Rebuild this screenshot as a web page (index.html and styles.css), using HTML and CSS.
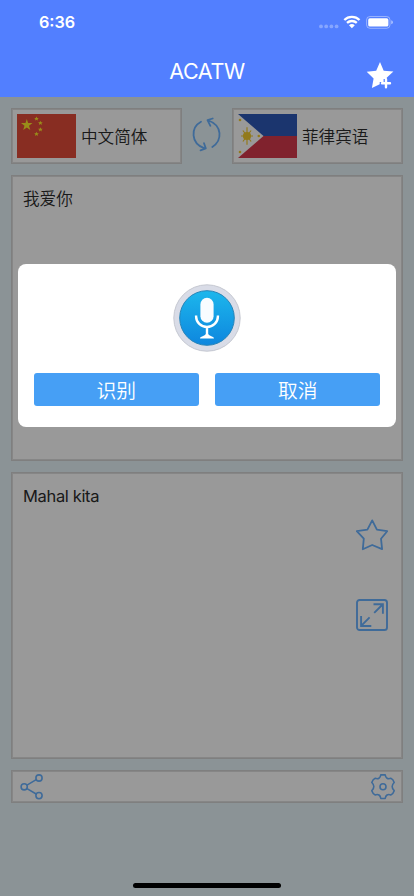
FILE: index.html
```html
<!DOCTYPE html>
<html lang="zh-CN">
<head>
    <meta charset="UTF-8">
    <meta name="viewport" content="width=device-width, initial-scale=1.0">
    <title>ACATW</title>
    <link rel="stylesheet" href="styles.css">
</head>
<body>
    <header class="header">
        <div class="status-bar">
            <span class="time">6:36</span>
            <svg class="status-icons" width="84" height="16" viewBox="0 0 84 16">
                <g fill="#fff" opacity=".3">
                    <circle cx="3" cy="12.4" r="1.9"/>
                    <circle cx="8.2" cy="12.4" r="1.9"/>
                    <circle cx="13.4" cy="12.4" r="1.9"/>
                    <circle cx="18.6" cy="12.4" r="1.9"/>
                </g>
                <g fill="none" stroke="#fff" stroke-width="2.3">
                    <path d="M26.3 6a11 11 0 0 1 15.2 0"/>
                    <path d="M29 8.9a7.2 7.2 0 0 1 9.8 0"/>
                </g>
                <path fill="#fff" d="M31 11.2a4.4 4.4 0 0 1 5.8 0L33.9 14.2z"/>
                <rect x="48.6" y="2.5" width="23.4" height="11.8" rx="3.4" fill="none" stroke="#fff" opacity=".4"/>
                <rect x="50.2" y="4.2" width="20.2" height="8.4" rx="1.7" fill="#fff"/>
                <path d="M73.2 6.3q1.8.7 1.8 2t-1.8 2z" fill="#fff" opacity=".5"/>
            </svg>
        </div>
        <div class="nav-bar">
            <h1>ACATW</h1>
            <svg class="favorites" width="28" height="28" viewBox="0 0 28 28">
                <path fill="#fff" d="M14 1l3.7 8.7 9.7.7-6.5 6-.7 1.5h-2.6v3.1h-3.9v2.2L5.9 27l1.7-9.6L.7 10.7l9.5-1z"/>
                <path stroke="#fff" stroke-width="2.4" stroke-linecap="round" d="M20 18.2v8M16 22.2h8"/>
            </svg>
        </div>
    </header>

    <main class="main">
        <div class="languages">
            <div class="language">
                <svg class="flag" width="59" height="44" viewBox="0 0 59 44">
                    <path fill="#e34b3a" d="M0 0h59v44H0z"/>
                    <g fill="#ffec2b">
                        <path d="M9.8 5l1.3 4.1h4.4L12 11.7l1.3 4.4-3.5-2.6-3.6 2.6 1.3-4.4L4 9.1h4.5z"/>
                        <path id="small-star" d="M19.5 2.5l.7 1.4 1.6.1-1.2 1.1.3 1.5-1.4-.8-1.4.8.3-1.5L17.2 4l1.6-.1z"/>
                        <use href="#small-star" x="3.9" y="4.3"/>
                        <use href="#small-star" x="3.9" y="10.8"/>
                        <use href="#small-star" y="15.3"/>
                    </g>
                </svg>
                <span>中文简体</span>
            </div>
            <svg class="swap" width="50" height="40" viewBox="0 0 50 40">
                <g fill="none" stroke="#6ab2ff" stroke-width="1.8" stroke-linecap="round" stroke-linejoin="round">
                    <path d="M19 5.7C8.5 11.5 8.5 27.5 22.5 32.3M18.5 34.3l5.3-1.9-1.8-5.2"/>
                    <path d="M30.3 31C40.5 24.5 40.5 9.5 26.5 4.5M30.7 2.5l-5.2 1.7 2.9 5.6"/>
                </g>
            </svg>
            <div class="language">
                <svg class="flag" width="59" height="44" viewBox="0 0 59 44">
                    <path fill="#2d59b8" d="M0 0h59v22H0z"/>
                    <path fill="#d63a4b" d="M0 22h59v22H0z"/>
                    <path fill="#fff" d="M0 0l25.5 22L0 44z"/>
                    <g fill="#f4cc30" stroke="#f4cc30">
                        <circle cx="9" cy="22" r="4.1" stroke="none"/>
                        <path stroke-width="1.2" d="M9 13.2v17.6M3 22h12M4.9 16.5l8.2 11M13.1 16.5l-8.2 11"/>
                        <g stroke="none">
                            <circle cx="2" cy="6" r="1.3"/>
                            <circle cx="2" cy="38" r="1.3"/>
                            <circle cx="20.8" cy="22" r="1.3"/>
                        </g>
                    </g>
                </svg>
                <span>菲律宾语</span>
            </div>
        </div>

        <div class="panel source">我爱你</div>

        <div class="panel result">
            <p>Mahal kita</p>
            <div class="actions">
                <svg width="32" height="32" viewBox="0 0 32 32">
                    <path fill="none" stroke="#6ab2ff" stroke-width="1.8" stroke-linejoin="round" d="M16.2 1.4l4.7 9.3 10.3 1.5-6.2 7.5 1.1 10.5-9.9-4.2L6.8 30.2l1-10.5-7-7.5 10.6-1.5z"/>
                </svg>
                <svg width="32" height="32" viewBox="0 0 32 32">
                    <g fill="none" stroke="#6ab2ff" stroke-width="1.9">
                        <rect x="1" y="1" width="30" height="30" rx="2.6"/>
                        <path d="M17.5 5.2h9.4v9.6M26.6 5.5l-8.4 8.4M5.1 17v10h10.2M5.4 26.7l8.2-8.3"/>
                    </g>
                </svg>
            </div>
        </div>

        <div class="toolbar">
            <svg width="24" height="26" viewBox="0 0 24 26">
                <g fill="none" stroke="#6ab2ff" stroke-width="1.6">
                    <circle cx="4.2" cy="12.8" r="3.1"/>
                    <circle cx="19" cy="4" r="3.1"/>
                    <circle cx="19" cy="21.6" r="3.1"/>
                    <path d="M7 11.1L16.2 5.6M7 14.6l9.2 5.4"/>
                </g>
            </svg>
            <svg width="26" height="26" viewBox="0 0 26 26">
                <g fill="none" stroke="#6ab2ff" stroke-width="1.6" stroke-linejoin="round">
                    <path d="M10.8 .9h4.4c.4 3.1 2.6 4.6 5.6 3.4q2.3.8 3.4 4.2c-2.7 2.4-2.7 5.8 0 8.2q-1.1 3.4-3.4 4.2c-3-1.2-5.2.3-5.6 3.6h-4.4c-.4-3.3-2.6-4.8-5.6-3.6q-2.3-.8-3.4-4.2c2.7-2.4 2.7-5.8 0-8.2q1.1-3.4 3.4-4.2c3 1.2 5.2-.3 5.6-3.4z"/>
                    <circle cx="13" cy="12.8" r="3"/>
                </g>
            </svg>
        </div>
    </main>

    <div class="overlay">
        <div class="dialog">
            <svg class="mic" width="68" height="70" viewBox="0 0 68 70">
                <defs>
                    <linearGradient id="blue" x1="0" y1="0" x2="0" y2="1">
                        <stop offset="0" stop-color="#1cb7ec"/>
                        <stop offset="1" stop-color="#0e86de"/>
                    </linearGradient>
                </defs>
                <circle cx="34" cy="35" r="33.2" fill="#d9dce7" stroke="#c5c8d1"/>
                <circle cx="34" cy="35" r="27.3" fill="url(#blue)" stroke="#2784b8"/>
                <rect x="27.4" y="14.8" width="13.2" height="25" rx="6.6" fill="#f8fcff"/>
                <path fill="none" stroke="#fff" stroke-width="2.4" d="M23.1 32.4v1.2a10.9 10.4 0 0 0 21.8 0v-1.2M34 43.5v9.5"/>
                <path fill="#fff" d="M27 55.6c0-2.6 5-2.2 5.8-4.6h2.4c.8 2.4 5.8 2 5.8 4.6z"/>
            </svg>
            <div class="buttons">
                <button type="button">识别</button>
                <button type="button">取消</button>
            </div>
        </div>
    </div>
    <div class="home-indicator"></div>
</body>
</html>
```

FILE: styles.css
```css
* {
    box-sizing: border-box;
}
body {
    margin: 0;
    height: 896px;
    position: relative;
    overflow: hidden;
    background: #e8f5fa;
    color: #2c2c2c;
    font-family: Inter, "Noto Sans CJK SC", sans-serif;
    font-size: 16.6px;
    font-weight: 350;
}
svg {
    display: block;
    flex-shrink: 0;
}
.header {
    height: 97px;
    background: #527fff;
    color: #fff;
}
.status-bar {
    display: flex;
    justify-content: space-between;
    align-items: center;
    height: 44px;
    padding: 0 12px 0 39px;
}
.time {
    font-size: 16.2px;
    font-weight: 600;
}
.nav-bar {
    display: grid;
    grid-template-columns: 1fr auto 1fr;
    align-items: center;
    height: 53px;
    padding-right: 20px;
    padding-left: 20px;
}
.nav-bar h1 {
    grid-column: 2;
    margin: 0;
    font-size: 21.5px;
    font-weight: 400;
    line-height: 26px;
    letter-spacing: -0.4px;
}
.favorites {
    justify-self: end;
    margin-top: 9px;
}
.main {
    display: flex;
    flex-direction: column;
    gap: 11px;
    padding: 11px 11px 0;
}
.languages {
    display: flex;
    align-items: center;
    height: 56px;
}
.language,
.panel,
.toolbar {
    background: #fff;
    border: 1px solid #d4d4d4;
    box-shadow: inset 0 0 0 1px #e0e0e0;
}
.language {
    display: flex;
    align-items: center;
    gap: 5px;
    width: 171px;
    height: 56px;
    padding-left: 5px;
}
.panel {
    padding: 11px;
}
.source {
    height: 286px;
    line-height: 24px;
}
.result {
    height: 287px;
    display: flex;
    justify-content: space-between;
}
.result p {
    margin: 0;
    font-size: 16.5px;
    font-weight: 400;
    line-height: 24px;
    letter-spacing: -0.35px;
}
.actions {
    display: flex;
    flex-direction: column;
    gap: 48px;
    padding-top: 35px;
    padding-right: 3px;
}
.toolbar {
    display: flex;
    align-items: center;
    justify-content: space-between;
    height: 33px;
    padding: 0 6px 0 8px;
}
.overlay {
    position: absolute;
    top: 97px;
    right: 0;
    bottom: 0;
    left: 0;
    background: rgba(0, 0, 0, 0.4);
}
.dialog {
    display: flex;
    flex-direction: column;
    align-items: center;
    gap: 20px;
    width: 378.5px;
    height: 163.5px;
    margin: 166.5px auto 0;
    padding: 19.5px 16px 0;
    background: #fff;
    border-radius: 8px;
}
.buttons {
    display: flex;
    gap: 16.5px;
    width: 100%;
}
.buttons button {
    flex: 1;
    height: 33px;
    padding: 0;
    border: none;
    border-radius: 3px;
    background: #469ff5;
    color: #fff;
    font-family: "Noto Sans CJK SC", sans-serif;
    font-size: 19.8px;
    font-weight: 350;
    line-height: 32px;
}
.home-indicator {
    position: absolute;
    bottom: 8px;
    left: 133px;
    width: 148px;
    height: 5px;
    border-radius: 3px;
    background: #000;
}
```
